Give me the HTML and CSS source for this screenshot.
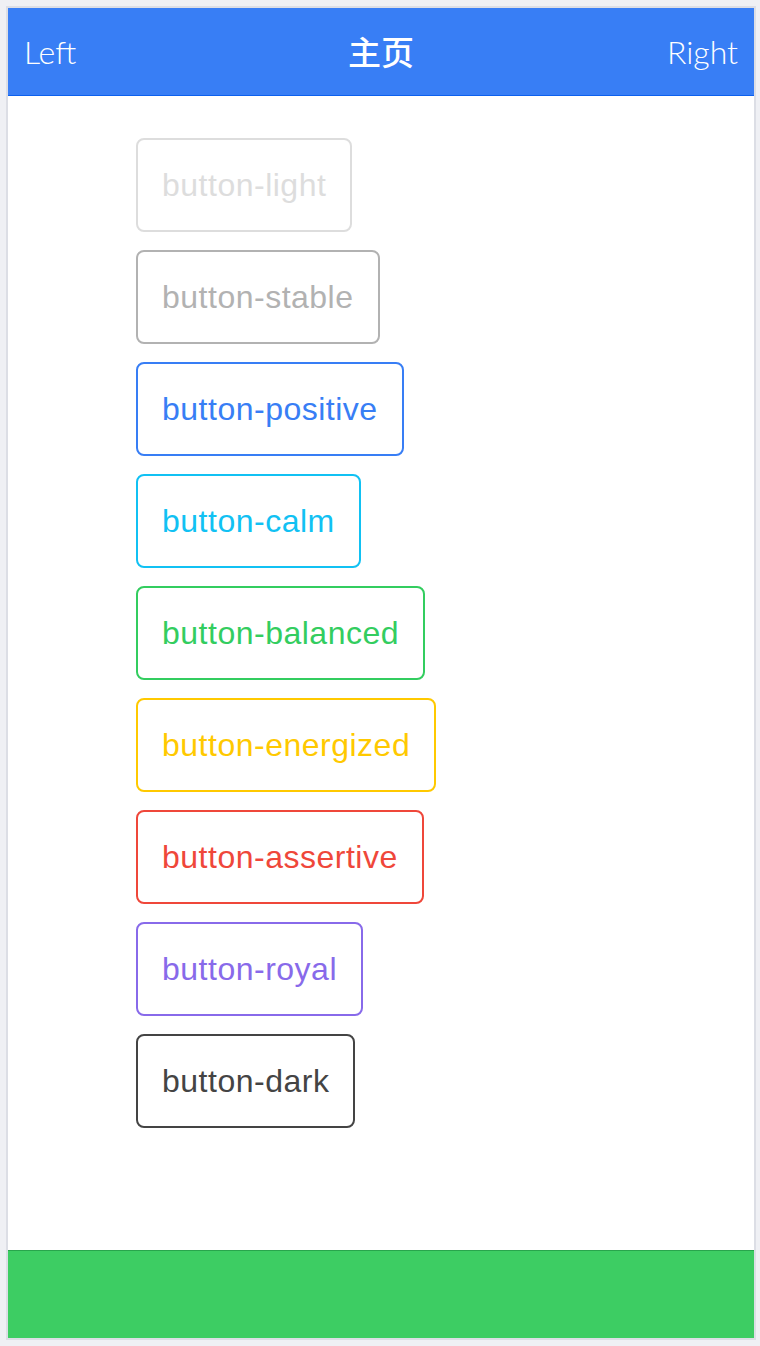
FILE: index.html
```html
<!DOCTYPE html>
<html lang="zh-CN">
<head>
<meta charset="utf-8">
<title>主页</title>
<link rel="stylesheet" href="styles.css">
</head>
<body>
<div class="phone">
  <header class="bar bar-header">
    <span class="bar-btn bar-btn-left">Left</span>
    <h1 class="title">主页</h1>
    <span class="bar-btn bar-btn-right">Right</span>
  </header>
  <main class="content">
    <button class="btn btn-light">button-light</button>
    <button class="btn btn-stable">button-stable</button>
    <button class="btn btn-positive">button-positive</button>
    <button class="btn btn-calm">button-calm</button>
    <button class="btn btn-balanced">button-balanced</button>
    <button class="btn btn-energized">button-energized</button>
    <button class="btn btn-assertive">button-assertive</button>
    <button class="btn btn-royal">button-royal</button>
    <button class="btn btn-dark">button-dark</button>
  </main>
  <footer class="bar bar-footer"></footer>
</div>
</body>
</html>
```

FILE: styles.css
```css
html, body {
  margin: 0;
  padding: 0;
}

body {
  background: #eff0f4;
  padding: 6px;
}

.phone {
  width: 750px;
  height: 1334px;
  box-sizing: border-box;
  border: 2px solid #dcdee5;
  background: #fff;
  display: flex;
  flex-direction: column;
}

.bar {
  flex: none;
  height: 88px;
  box-sizing: border-box;
}

.bar-header {
  background: #387ef5;
  border-bottom: 1px solid #0c60ee;
  display: grid;
  grid-template-columns: 1fr auto 1fr;
  align-items: center;
  padding: 0 16px;
  color: #fff;
}

.bar-btn {
  font-family: "Lato", "Liberation Sans", sans-serif;
  font-weight: 300;
  font-size: 32px;
}

.bar-btn-right {
  justify-self: end;
}

.title {
  margin: 0;
  font-family: "Noto Sans CJK SC", sans-serif;
  font-weight: 500;
  font-size: 33px;
  line-height: 1;
}

.content {
  flex: 1;
  padding: 42px 0 0 128px;
  display: flex;
  flex-direction: column;
  align-items: flex-start;
  gap: 18px;
}

.btn {
  height: 94px;
  box-sizing: border-box;
  border: 2px solid currentColor;
  border-radius: 8px;
  padding: 0 24px;
  background: transparent;
  font-family: "Liberation Sans", Arial, sans-serif;
  font-size: 32px;
  letter-spacing: 0.5px;
  display: flex;
  align-items: center;
  margin: 0;
}

.btn-light { color: #dddddd; }
.btn-stable { color: #b2b2b2; }
.btn-positive { color: #387ef5; }
.btn-calm { color: #11c1f3; }
.btn-balanced { color: #33cd5f; }
.btn-energized { color: #ffc900; }
.btn-assertive { color: #ef473a; }
.btn-royal { color: #886aea; }
.btn-dark { color: #444444; }

.bar-footer {
  background: #3dcd63;
  border-top: 1px solid #28a54c;
}
```
